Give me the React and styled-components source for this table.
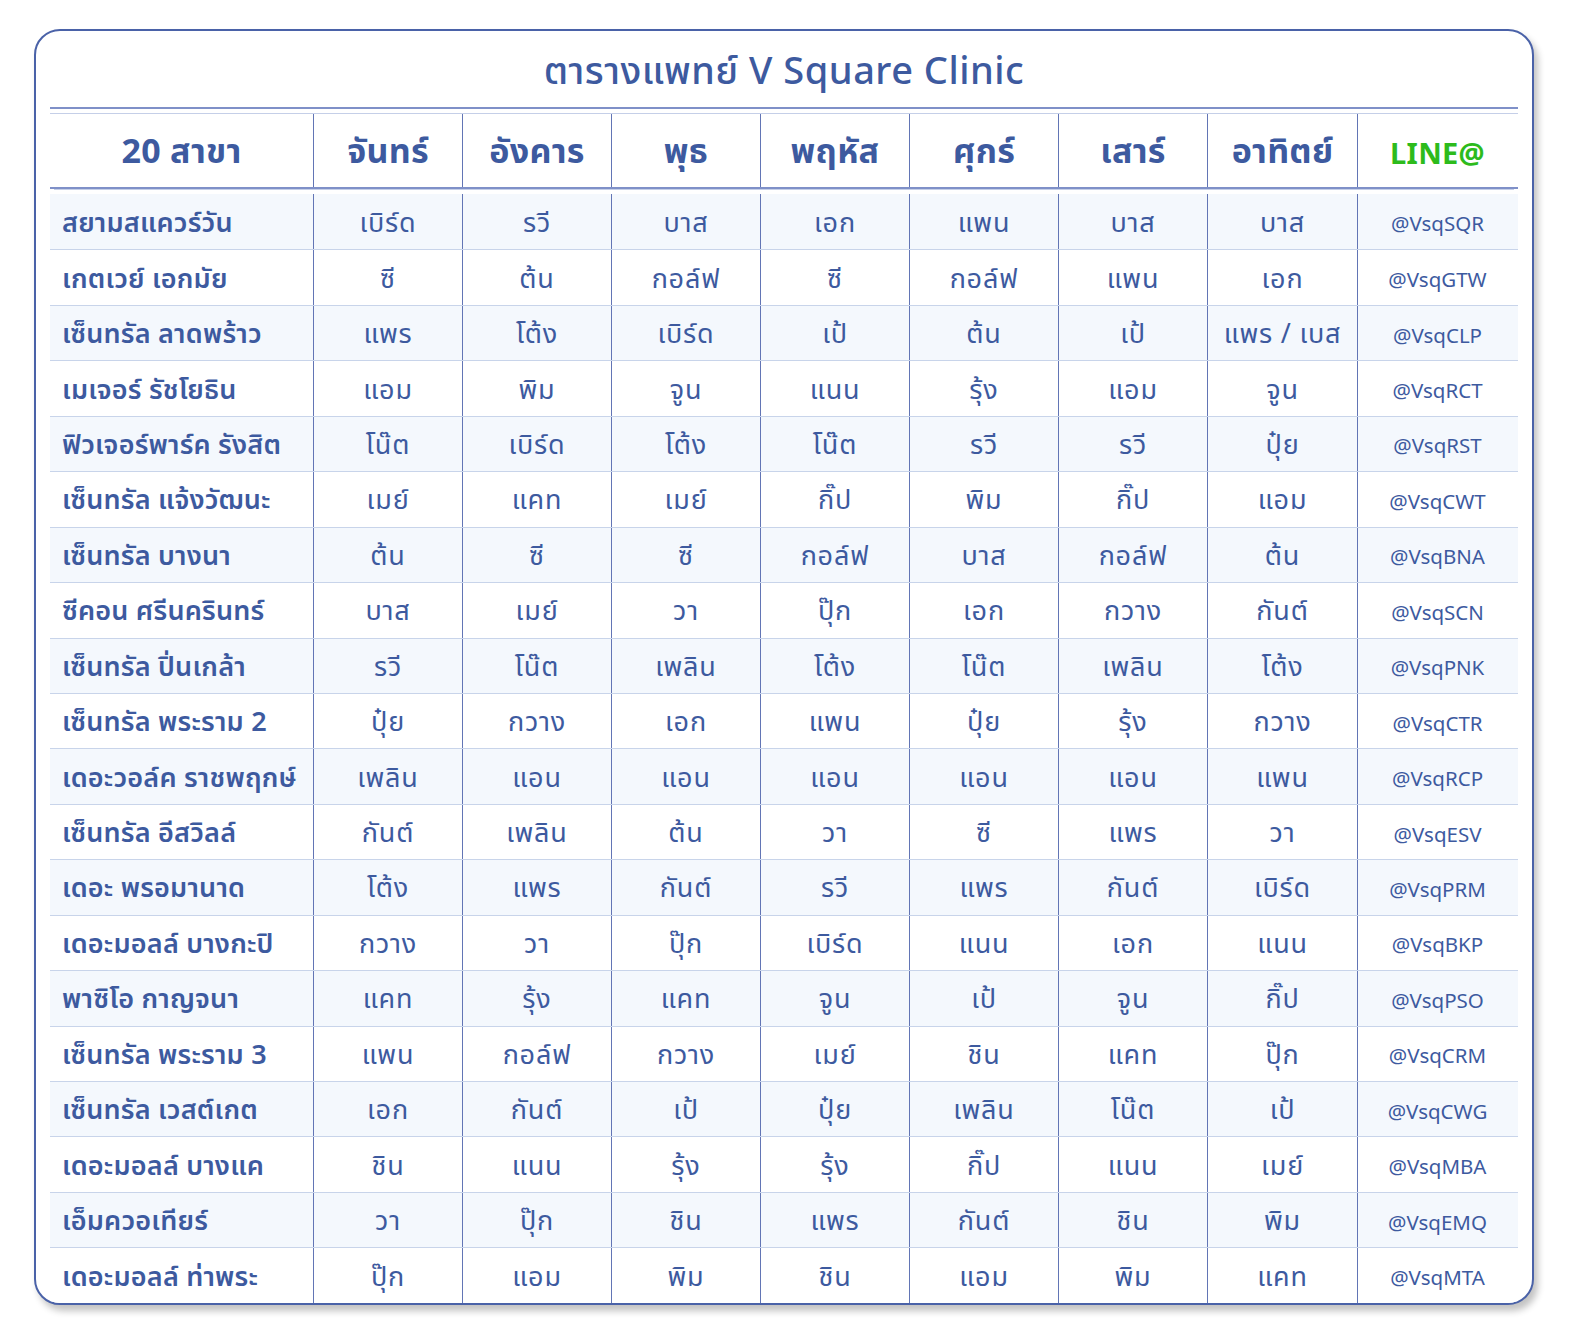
import React from "react";
import styled, { createGlobalStyle } from "styled-components";

const GlobalStyle = createGlobalStyle`
  html, body {
    margin: 0;
    padding: 0;
    background: #ffffff;
  }
  body {
    font-family: "Noto Sans", "Noto Sans Thai", "DejaVu Sans", sans-serif;
    color: #3d5a9f;
  }
`;

const Page = styled.div`
  padding: 29px 0 0 34px;
  width: 1570px;
  height: 1332px;
  box-sizing: border-box;
`;

const Card = styled.div`
  width: 1500px;
  box-sizing: border-box;
  border: 2px solid #4a62a8;
  border-radius: 26px;
  background: #ffffff;
  padding: 0 14px;
  box-shadow: 4px 6px 7px rgba(0, 0, 0, 0.24);
  overflow: hidden;
`;

const Title = styled.h1`
  margin: 0;
  height: 78px;
  padding-top: 6px;
  box-sizing: border-box;
  display: flex;
  align-items: center;
  justify-content: center;
  font-size: 38px;
  font-weight: 500;
  letter-spacing: 0.5px;
  color: #3d5a9f;
  border-bottom: 2px solid #7f90c8;
`;

const Table = styled.div`
  border-top: 4px solid #ffffff;
  box-shadow: inset 0 1px 0 #c5cfe8;
  padding-top: 1px;
`;

const Row = styled.div`
  display: grid;
  grid-template-columns: 263px repeat(6, 149px) 150px 160px;
  height: ${(p) => (p.$head ? "75px" : "55.45px")};
  background: ${(p) => (p.$shade ? "#f4f8fd" : "#ffffff")};
  border-top: ${(p) => (p.$first ? "none" : "1px solid #c8d4ea")};
  box-sizing: border-box;
`;

const HeadRow = styled(Row)`
  border-bottom: 2px solid #7f90c8;
  box-shadow: 0 5px 0 -4px #c5cfe8;
  margin-bottom: 5px;
  border-top: none;
`;

const Cell = styled.div`
  display: flex;
  align-items: center;
  justify-content: ${(p) => (p.$left ? "flex-start" : "center")};
  padding-left: ${(p) => (p.$left ? "12px" : "0")};
  padding-top: 3px;
  border-left: ${(p) => (p.$noLine ? "none" : "1px solid #6275b5")};
  font-size: 27px;
  letter-spacing: ${(p) => (p.$left ? "0.2px" : "0.8px")};
  font-weight: ${(p) => (p.$left ? 600 : 400)};
  color: #3d5a9f;
  white-space: nowrap;
`;

const HeadCell = styled(Cell)`
  font-size: ${(p) => (p.$line ? "29px" : "34px")};
  letter-spacing: 0.3px;
  font-weight: 700;
  padding-top: 4px;
  color: ${(p) => (p.$line ? "#2dbb1c" : "#3d5a9f")};
`;

const LineId = styled(Cell)`
  font-size: 20.5px;
  letter-spacing: 0;
`;

const days = ["จันทร์", "อังคาร", "พุธ", "พฤหัส", "ศุกร์", "เสาร์", "อาทิตย์"];

const rows = [
  ["สยามสแควร์วัน", "เบิร์ด", "รวี", "บาส", "เอก", "แพน", "บาส", "บาส", "@VsqSQR"],
  ["เกตเวย์ เอกมัย", "ซี", "ต้น", "กอล์ฟ", "ซี", "กอล์ฟ", "แพน", "เอก", "@VsqGTW"],
  ["เซ็นทรัล ลาดพร้าว", "แพร", "โต้ง", "เบิร์ด", "เป้", "ต้น", "เป้", "แพร / เบส", "@VsqCLP"],
  ["เมเจอร์ รัชโยธิน", "แอม", "พิม", "จูน", "แนน", "รุ้ง", "แอม", "จูน", "@VsqRCT"],
  ["ฟิวเจอร์พาร์ค รังสิต", "โน๊ต", "เบิร์ด", "โต้ง", "โน๊ต", "รวี", "รวี", "ปุ๋ย", "@VsqRST"],
  ["เซ็นทรัล แจ้งวัฒนะ", "เมย์", "แคท", "เมย์", "กิ๊ป", "พิม", "กิ๊ป", "แอม", "@VsqCWT"],
  ["เซ็นทรัล บางนา", "ต้น", "ซี", "ซี", "กอล์ฟ", "บาส", "กอล์ฟ", "ต้น", "@VsqBNA"],
  ["ซีคอน ศรีนครินทร์", "บาส", "เมย์", "วา", "ปุ๊ก", "เอก", "กวาง", "กันต์", "@VsqSCN"],
  ["เซ็นทรัล ปิ่นเกล้า", "รวี", "โน๊ต", "เพลิน", "โต้ง", "โน๊ต", "เพลิน", "โต้ง", "@VsqPNK"],
  ["เซ็นทรัล พระราม 2", "ปุ๋ย", "กวาง", "เอก", "แพน", "ปุ๋ย", "รุ้ง", "กวาง", "@VsqCTR"],
  ["เดอะวอล์ค ราชพฤกษ์", "เพลิน", "แอน", "แอน", "แอน", "แอน", "แอน", "แพน", "@VsqRCP"],
  ["เซ็นทรัล อีสวิลล์", "กันต์", "เพลิน", "ต้น", "วา", "ซี", "แพร", "วา", "@VsqESV"],
  ["เดอะ พรอมานาด", "โต้ง", "แพร", "กันต์", "รวี", "แพร", "กันต์", "เบิร์ด", "@VsqPRM"],
  ["เดอะมอลล์ บางกะปิ", "กวาง", "วา", "ปุ๊ก", "เบิร์ด", "แนน", "เอก", "แนน", "@VsqBKP"],
  ["พาซิโอ กาญจนา", "แคท", "รุ้ง", "แคท", "จูน", "เป้", "จูน", "กิ๊ป", "@VsqPSO"],
  ["เซ็นทรัล พระราม 3", "แพน", "กอล์ฟ", "กวาง", "เมย์", "ชิน", "แคท", "ปุ๊ก", "@VsqCRM"],
  ["เซ็นทรัล เวสต์เกต", "เอก", "กันต์", "เป้", "ปุ๋ย", "เพลิน", "โน๊ต", "เป้", "@VsqCWG"],
  ["เดอะมอลล์ บางแค", "ชิน", "แนน", "รุ้ง", "รุ้ง", "กิ๊ป", "แนน", "เมย์", "@VsqMBA"],
  ["เอ็มควอเทียร์", "วา", "ปุ๊ก", "ชิน", "แพร", "กันต์", "ชิน", "พิม", "@VsqEMQ"],
  ["เดอะมอลล์ ท่าพระ", "ปุ๊ก", "แอม", "พิม", "ชิน", "แอม", "พิม", "แคท", "@VsqMTA"],
];

export default function App() {
  return (
    <>
      <GlobalStyle />
      <Page>
        <Card>
          <Title>ตารางแพทย์ V Square Clinic</Title>
          <Table>
            <HeadRow $head>
              <HeadCell $noLine>20 สาขา</HeadCell>
              {days.map((d) => (
                <HeadCell key={d}>{d}</HeadCell>
              ))}
              <HeadCell $line>LINE@</HeadCell>
            </HeadRow>
            {rows.map((r, i) => (
              <Row key={r[8]} $shade={i % 2 === 0} $first={i === 0}>
                <Cell $left $noLine>
                  {r[0]}
                </Cell>
                {r.slice(1, 8).map((name, j) => (
                  <Cell key={j}>{name}</Cell>
                ))}
                <LineId>{r[8]}</LineId>
              </Row>
            ))}
          </Table>
        </Card>
      </Page>
    </>
  );
}
